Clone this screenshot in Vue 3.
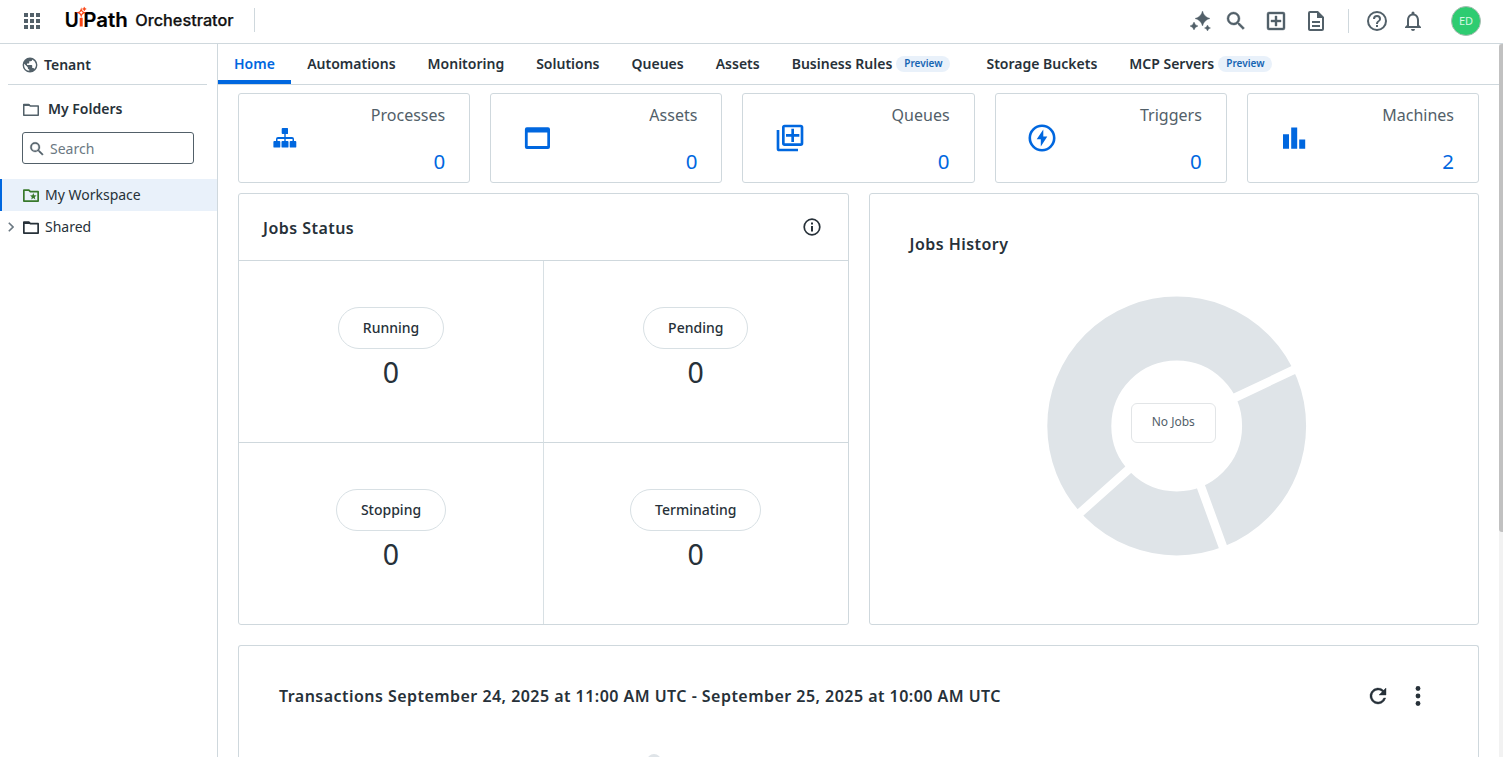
<script setup>
const tabs = [
  { name: 'Home', active: true },
  { name: 'Automations' },
  { name: 'Monitoring' },
  { name: 'Solutions' },
  { name: 'Queues' },
  { name: 'Assets' },
  { name: 'Business Rules', preview: true },
  { name: 'Storage Buckets' },
  { name: 'MCP Servers', preview: true },
]
const cards = [
  { name: 'Processes', value: 0, icon: 'processes' },
  { name: 'Assets', value: 0, icon: 'assets' },
  { name: 'Queues', value: 0, icon: 'queues' },
  { name: 'Triggers', value: 0, icon: 'triggers' },
  { name: 'Machines', value: 2, icon: 'machines' },
]
const statuses = ['Running', 'Pending', 'Stopping', 'Terminating']
</script>

<template>
  <div class="app">
    <header class="header">
      <svg class="waffle" width="16" height="16" viewBox="0 0 16 16">
        <path d="M0 0h4v4H0zM6 0h4v4H6zM12 0h4v4h-4zM0 6h4v4H0zM6 6h4v4H6zM12 6h4v4h-4zM0 12h4v4H0zM6 12h4v4H6zM12 12h4v4h-4z" />
      </svg>
      <svg class="brand" width="172" height="32" viewBox="0 0 172 32">
        <text class="logo-text" x="-.3" y="17.500" textLength="14" lengthAdjust="spacingAndGlyphs">U</text>
        <text class="logo-text" x="18.300" y="17.500" textLength="44.500" lengthAdjust="spacingAndGlyphs">Path</text>
        <path d="M16.200 8.800v8.700" stroke="#fa4616" stroke-width="3" />
        <path d="M16.200.6q.7 2.400 3 3q-2.300.6-3 3q-.7-2.400-3-3q2.300-.6 3-3z" fill="none" stroke="#fa4616" stroke-width="1.300" />
        <path d="M19.300-2.100q.3 1.700 2 2q-1.700.3-2 2q-.3-1.700-2-2q1.700-.3 2-2z" fill="#fa4616" stroke="#fa4616" stroke-width=".4" />
        <text class="product" x="70.300" y="17" textLength="98.300" lengthAdjust="spacingAndGlyphs">Orchestrator</text>
      </svg>
      <i class="divider first"></i>
      <nav class="tools">
        <svg class="t-spark" width="24" height="24" viewBox="0 0 24 24">
          <path d="M13.500 2q1.500 6 7.500 7.500q-6 1.500-7.500 7.500q-1.500-6-7.500-7.500q6-1.500 7.500-7.500zM5 13q.8 3.200 4 4q-3.200.8-4 4q-.8-3.200-4-4q3.200-.8 4-4zM18.500 16q.600 2.400 3 3q-2.400.6-3 3q-.6-2.400-3-3q2.400-.6 3-3z" stroke="currentColor" stroke-width=".4" />
        </svg>
        <svg class="t-search bold" width="24" height="24" viewBox="0 0 24 24">
          <path d="M15.500 14h-.79l-.28-.27A6.470 6.470 0 0 0 16 9.500 6.500 6.500 0 1 0 9.500 16c1.610 0 3.090-.59 4.230-1.570l.27.28v.79l5 4.990L20.490 19zm-6 0a4.500 4.500 0 1 1 0-9 4.500 4.500 0 0 1 0 9z" />
        </svg>
        <svg class="t-add bold" width="24" height="24" viewBox="0 0 24 24">
          <path d="M19 3H5a2 2 0 0 0-2 2v14a2 2 0 0 0 2 2h14a2 2 0 0 0 2-2V5a2 2 0 0 0-2-2zm0 16H5V5h14zM11 17h2v-4h4v-2h-4V7h-2v4H7v2h4z" />
        </svg>
        <svg class="t-doc" width="24" height="24" viewBox="0 0 24 24">
          <path d="M8 16h8v2H8zm0-4h8v2H8zm6-10H6a2 2 0 0 0-2 2v16c0 1.100.89 2 1.990 2H18a2 2 0 0 0 2-2V8zm4 18H6V4h7v5h5z" />
        </svg>
        <i class="divider"></i>
        <svg class="t-help" width="24" height="24" viewBox="0 0 24 24">
          <path d="M11 18h2v-2h-2zm1-16a10 10 0 1 0 0 20 10 10 0 0 0 0-20zm0 18a8 8 0 1 1 0-16 8 8 0 0 1 0 16zm0-14a4 4 0 0 0-4 4h2a2 2 0 1 1 4 0c0 2-3 1.750-3 5h2c0-2.250 3-2.500 3-5a4 4 0 0 0-4-4z" />
        </svg>
        <svg class="t-bell" width="24" height="24" viewBox="0 0 24 24">
          <path d="M12 22a2 2 0 0 0 2-2h-4a2 2 0 0 0 2 2zm6-6v-5c0-3.070-1.630-5.640-4.500-6.320V4a1.500 1.500 0 0 0-3 0v.68C7.640 5.360 6 7.920 6 11v5l-2 2v1h16v-1zm-2 1H8v-6c0-2.480 1.510-4.500 4-4.500s4 2.020 4 4.500z" />
        </svg>
        <span class="avatar">ED</span>
      </nav>
    </header>

    <div class="body">
      <aside class="side">
        <div class="tenant">
          <svg width="16" height="16" viewBox="1.200 1.200 21.600 21.600">
            <path d="M12 2a10 10 0 1 0 0 20 10 10 0 0 0 0-20zm-1 17.930A7.990 7.990 0 0 1 4 12c0-.62.080-1.210.210-1.790L9 15v1a2 2 0 0 0 2 2zm6.900-2.540A2 2 0 0 0 16 16h-1v-3a1 1 0 0 0-1-1H8v-2h2a1 1 0 0 0 1-1V7h2a2 2 0 0 0 2-2v-.41a7.990 7.990 0 0 1 2.900 12.800z" />
          </svg>
          <span>Tenant</span>
        </div>
        <div class="folders">
          <svg width="16" height="13" viewBox="0 0 16 13"><path d="M.75 1.500h5l1.500 1.500h8v9.250H.75z" fill="none" stroke="currentColor" stroke-width="1.500" stroke-linejoin="round" /><path d="M.5 1H6l1.500 2H.5z" /></svg>
          <span>My Folders</span>
        </div>
        <div class="search">
          <svg class="bold" width="18" height="18" viewBox="0 0 24 24"><path d="M15.500 14h-.79l-.28-.27A6.470 6.470 0 0 0 16 9.500 6.500 6.500 0 1 0 9.500 16c1.610 0 3.090-.59 4.230-1.570l.27.28v.79l5 4.990L20.490 19zm-6 0a4.500 4.500 0 1 1 0-9 4.500 4.500 0 0 1 0 9z" /></svg>
          <span>Search</span>
        </div>
        <div class="item selected">
          <svg class="folder green" width="16" height="13" viewBox="0 0 16 13"><path d="M.85 1.200h5l1.500 1.500h7.800v9.400H.85z" fill="none" stroke="currentColor" stroke-width="1.700" stroke-linejoin="round" /><path d="M10.300 4l.9 2.200 2.400.2-1.800 1.600.5 2.400-2-1.300-2 1.300.5-2.400-1.800-1.600 2.400-.2z" /></svg>
          <span>My Workspace</span>
        </div>
        <div class="item">
          <svg class="chevron" width="6" height="10" viewBox="0 0 6 10"><path d="M.8.8L5 5 .8 9.200" fill="none" stroke="#6b7882" stroke-width="1.600" /></svg>
          <svg class="folder" width="16" height="13" viewBox="0 0 16 13"><path d="M.85 1.200h5l1.500 1.500h7.800v9.400H.85z" fill="none" stroke="currentColor" stroke-width="1.700" stroke-linejoin="round" /><path d="M.5 1H6l1.500 2H.5z" /></svg>
          <span>Shared</span>
        </div>
      </aside>

      <main class="main">
        <nav class="tabs">
          <div v-for="t in tabs" :key="t.name" class="tab" :class="{ active: t.active, tagged: t.preview }">
            <span>{{ t.name }}</span><span v-if="t.preview" class="chip">Preview</span>
          </div>
        </nav>

        <div class="content">
          <section class="cards">
            <article v-for="c in cards" :key="c.name" class="card">
              <svg v-if="c.icon === 'processes'" class="glyph" width="32" height="32" viewBox="2 0 32 32">
                <path d="M14.600 6h4.800q.6 0 .6.600v4.800q0 .6-.6.600h-1.700v3H24a2 2 0 0 1 2 2v2h1.400q.9 0 .9.900v4.800q0 .9-.9.900h-4.800q-.9 0-.9-.9v-4.800q0-.9.900-.9h1.900v-2h-6.800v2h1.900q.9 0 .9.900v4.800q0 .9-.9.900h-5.200q-.9 0-.9-.9v-4.800q0-.9.900-.9h1.900v-2H9.500v2h1.900q.9 0 .9.900v4.800q0 .9-.9.900H6.300q-.9 0-.9-.9v-4.800q0-.9.900-.9H8v-2a2 2 0 0 1 2-2h6.300v-3h-1.700q-.9 0-.9-.9V6.900q0-.9.900-.9z" />
              </svg>
              <svg v-else-if="c.icon === 'assets'" class="glyph" width="32" height="32" viewBox="1 0 32 32">
                <path fill-rule="evenodd" d="M5.900 5.300h21.100a2 2 0 0 1 2 2v17.600a2 2 0 0 1-2 2H5.900a2 2 0 0 1-2-2V7.300a2 2 0 0 1 2-2zM6.700 10.500v13.600h19.600V10.500z" />
              </svg>
              <svg v-else-if="c.icon === 'queues'" class="glyph" width="32" height="32" viewBox="0 0 24 24">
                <path d="M4 6H2v14a2 2 0 0 0 2 2h14v-2H4zm16-4H8a2 2 0 0 0-2 2v12a2 2 0 0 0 2 2h12a2 2 0 0 0 2-2V4a2 2 0 0 0-2-2zm0 14H8V4h12zM13 15h2v-4h4V9h-4V5h-2v4H9v2h4z" />
              </svg>
              <svg v-else-if="c.icon === 'triggers'" class="glyph" width="32" height="32" viewBox="1 0 32 32">
                <circle cx="16" cy="16" r="12.200" fill="none" stroke="currentColor" stroke-width="2.600" />
                <path d="M17.300 7.500L10.700 17.300h4.100v7.200l6.500-10h-4z" />
              </svg>
              <svg v-else class="glyph" width="32" height="32" viewBox="1 0 32 32">
                <path d="M5 12.200h6v14.500H5zM13.200 5.500h6v21.200h-6zM21.200 17.500h6v9.200h-6z" />
              </svg>
              <div class="figures">
                <span class="label">{{ c.name }}</span>
                <span class="value">{{ c.value }}</span>
              </div>
            </article>
          </section>

          <section class="panels">
            <article class="panel status">
              <div class="panel-head">
                <h2>Jobs Status</h2>
                <svg width="18" height="18" viewBox="0 0 18 18"><circle cx="9" cy="9" r="7.800" fill="none" stroke="currentColor" stroke-width="1.700" /><path d="M8 4.500h2v2H8zM8 8h2v5.500H8z" /></svg>
              </div>
              <div class="grid">
                <div v-for="s in statuses" :key="s" class="cell">
                  <span class="pill">{{ s }}</span>
                  <span class="count">0</span>
                </div>
              </div>
            </article>
            <article class="panel history">
              <h2>Jobs History</h2>
              <div class="donut">
                <svg width="260" height="260" viewBox="0 0 260 260">
                  <circle cx="129.700" cy="130" r="97.400" fill="none" stroke="#dfe4e8" stroke-width="64" />
                  <path d="M182 104.500L257 69M151.500 184L180 262M86 169.500L28 221.300" fill="none" stroke="#fff" stroke-width="8.600" />
                </svg>
                <span class="empty">No Jobs</span>
              </div>
            </article>
          </section>

          <section class="panel transactions">
            <div class="trans-head">
              <h2>Transactions September 24, 2025 at 11:00 AM UTC - September 25, 2025 at 10:00 AM UTC</h2>
              <svg class="refresh bold" width="24" height="24" viewBox="0 0 24 24"><path d="M17.650 6.350A8 8 0 1 0 19.730 14h-2.080A6 6 0 1 1 12 6c1.660 0 3.140.69 4.220 1.780L13 11h7V4z" /></svg>
              <svg class="more" width="6" height="20" viewBox="0 0 6 20"><circle cx="3" cy="2.500" r="2.400" /><circle cx="3" cy="10" r="2.400" /><circle cx="3" cy="17.500" r="2.400" /></svg>
            </div>
            <svg class="plot" width="14" height="14" viewBox="0 0 14 14"><circle cx="7" cy="7" r="7" fill="#dfe4e8" /></svg>
          </section>
        </div>
      </main>
      <div class="scroll"><i></i></div>
    </div>
  </div>
</template>

<style>
body { overflow: hidden; }
</style>

<style scoped>
* { box-sizing: border-box; }
.app { height: 757px; display: flex; flex-direction: column; overflow: hidden; background: #fff; color: #273139; font: 14px/20px "Noto Sans", sans-serif; }
svg { display: block; flex: none; fill: currentColor; }
h2 { margin: 0; font-size: 16px; line-height: 24px; font-weight: 600; letter-spacing: .46px; }
.bold { stroke: currentColor; stroke-width: .4px; }

.header { height: 44px; flex: none; display: flex; align-items: center; border-bottom: 1px solid #cfd8dd; color: #526069; }
.waffle { margin: -2px 0 0 24px; }
.brand { margin: 6px 0 0 25px; overflow: visible; }
.logo-text { font: 600 19.500px Inter, sans-serif; fill: #000; stroke: #000; stroke-width: .2px; }
.product { font: 500 15.500px Inter, sans-serif; fill: #111; stroke: #111; stroke-width: .25px; }
.divider { width: 1px; height: 24px; background: #cfd8dd; margin-top: -3px; }
.divider.first { margin-left: 17px; }
.tools { margin: -2px 22px 0 auto; display: flex; align-items: center; }
.t-search { margin-left: 11px; }
.t-add { margin-left: 16px; }
.t-doc { margin-left: 16px; }
.tools .divider { margin: 0 16px 0 20px; }
.t-bell { margin-left: 12px; }
.avatar { width: 30px; height: 30px; margin-left: 26px; border-radius: 50%; background: #2ecc71; border: 1px solid #a9bcb2; color: #d7f7e4; font-size: 11px; line-height: 28px; text-align: center; }

.body { flex: 1; min-height: 0; display: flex; }
.side { width: 218px; flex: none; border-right: 1px solid #cfd8dd; }
.tenant { height: 41px; margin: 0 10px 0 8px; padding: 1px 0 0 14px; display: flex; align-items: center; gap: 6px; border-bottom: 1px solid #cfd8dd; font-weight: 600; }
.tenant svg, .folders svg { color: #526069; }
.folders { height: 47px; padding: 1px 0 0 23px; display: flex; align-items: center; gap: 9px; font-weight: 600; }
.search { width: 172px; height: 32px; margin-left: 22px; padding: 1px 0 0 5px; display: flex; align-items: center; gap: 4px; border: 1px solid #526069; border-radius: 3px; color: #526069; }
.search span { color: #6b7882; padding-top: 1px; }
.item { height: 32px; display: flex; align-items: center; padding-left: 8px; }
.item span { margin-left: 6px; }
.item.selected { margin-top: 15px; padding-left: 21px; border-left: 2px solid #0067df; background: #e9f1fa; }
.folder.green { color: #38792b; }
.chevron { margin-right: 9px; }

.main { flex: 1; min-width: 0; display: flex; flex-direction: column; }
.tabs { height: 41px; flex: none; display: flex; border-bottom: 1px solid #cfd8dd; font-weight: 600; }
.tab { height: 40px; padding: 0 16px; display: flex; align-items: center; white-space: nowrap; }
.tab.active { margin-right: .3px; color: #0067df; box-shadow: inset 0 -4px #0067df; }
.tab.tagged { padding-right: 20px; }
.chip { height: 16px; margin-left: 4px; padding: 0 8px; border-radius: 8px; background: #e9f1fa; color: #1665b3; font-size: 10px; line-height: 15px; }
.content { flex: 1; min-height: 0; padding: 8px 20px 0; display: flex; flex-direction: column; }
.cards { display: grid; grid-template-columns: repeat(5, 1fr); gap: 20px; }
.card { height: 90px; padding: 0 24px 0 31px; display: flex; align-items: center; justify-content: space-between; border: 1px solid #cfd8dd; border-radius: 3px; }
.glyph { color: #0067df; }
.figures { height: 100%; padding-top: 9px; display: flex; flex-direction: column; align-items: flex-end; }
.label { color: #526069; font-size: 16px; line-height: 24px; }
.value { margin-top: 20px; color: #0067df; font-size: 20.500px; line-height: 28px; }
.panels { display: grid; grid-template-columns: 1fr 1fr; gap: 20px; margin-top: 10px; }
.panel { border: 1px solid #cfd8dd; border-radius: 3px; }
.panels .panel { height: 432px; }
.status { display: flex; flex-direction: column; }
.panel-head { height: 67px; flex: none; padding: 2px 27px 0 24px; display: flex; align-items: center; justify-content: space-between; border-bottom: 1px solid #cfd8dd; }
.panel-head svg { margin-top: -2px; }
.grid { flex: 1; display: grid; grid-template: 1fr 1fr / 305px 1fr; }
.cell { display: flex; flex-direction: column; align-items: center; padding-top: 46px; }
.cell:nth-child(odd) { border-right: 1px solid #d8e0e4; }
.cell:nth-child(-n+2) { border-bottom: 1px solid #cfd8dd; }
.pill { height: 42px; padding: 0 24px; border: 1px solid #d8e0e4; border-radius: 21px; line-height: 40px; font-weight: 500; }
.count { margin-top: 3px; font-size: 28.500px; line-height: 40px; }
.history h2 { margin: 38px 0 0 40px; }
.donut { width: 260px; height: 260px; margin: 40px auto 0; transform: translateX(3px); display: grid; place-items: center; }
.donut > * { grid-area: 1 / 1; }
.empty { width: 85px; height: 40px; margin: -6px 7px 0 0; border: 1px solid #e2e5e7; border-radius: 6px; background: #fff; color: #526069; font-size: 12px; line-height: 36px; text-align: center; }
.transactions { flex: 1; margin-top: 20px; border-bottom: 0; border-radius: 3px 3px 0 0; }
.trans-head { margin-top: 38px; padding: 0 57px 0 40px; display: flex; align-items: center; }
.refresh { margin-left: auto; }
.more { margin-left: 25px; }
.plot { margin: 46px 0 0 408px; }
.scroll { width: 4px; flex: none; background: #f2f2f2; }
.scroll i { display: block; height: 488px; background: #c1c1c1; border-radius: 3px 0 0 3px; }
</style>
